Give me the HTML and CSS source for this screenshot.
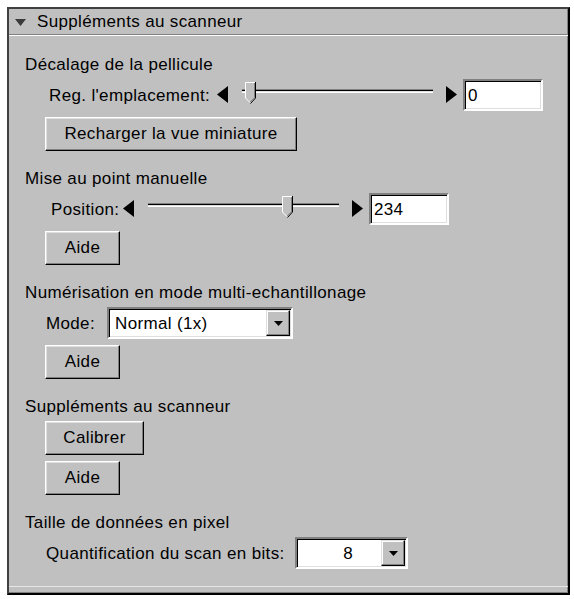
FILE: index.html
```html
<!DOCTYPE html>
<html lang="fr">
<head>
<meta charset="utf-8">
<title>Suppléments au scanneur</title>
<link rel="stylesheet" href="styles.css">
</head>
<body>
<div class="panel">
  <div class="header">
    <svg class="hdr-tri" width="11" height="7" viewBox="0 0 11 7"><polygon points="0,0 11,0 5.5,7" fill="#3a3a3a"/></svg>
    <span>Suppléments au scanneur</span>
  </div>
  <div class="content">
    <section class="group">
      <div class="glabel">Décalage de la pellicule</div>
      <div class="row">
        <span class="lbl lbl-reg">Reg. l'emplacement:</span>
        <svg class="arrow" width="11" height="17" viewBox="0 0 11 17"><polygon points="11,0 0,8.5 11,17" fill="#000"/></svg>
        <div class="track">
          <div class="channel"></div>
          <svg class="thumb" style="left:3px" width="11" height="22" viewBox="0 0 11 22"><polygon points="0,0 11,0 11,16 5.5,21.5 0,16" fill="#c0c0c0"/><polyline points="0.5,16 0.5,0.5 10,0.5" fill="none" stroke="#fff"/><polyline points="0.5,16 5,20.5" fill="none" stroke="#fff"/><polyline points="10.5,0 10.5,16 5.5,21.5" fill="none" stroke="#000"/><polyline points="9.5,1 9.5,15.7 5.2,20" fill="none" stroke="#808080"/></svg>
        </div>
        <svg class="arrow arrow-r" width="11" height="17" viewBox="0 0 11 17"><polygon points="0,0 11,8.5 0,17" fill="#000"/></svg>
        <div class="field">0</div>
      </div>
      <button class="btn btn-wide">Recharger la vue miniature</button>
    </section>

    <section class="group">
      <div class="glabel">Mise au point manuelle</div>
      <div class="row">
        <span class="lbl lbl-pos">Position:</span>
        <svg class="arrow" width="11" height="17" viewBox="0 0 11 17"><polygon points="11,0 0,8.5 11,17" fill="#000"/></svg>
        <div class="track">
          <div class="channel"></div>
          <svg class="thumb" style="left:134px" width="11" height="22" viewBox="0 0 11 22"><polygon points="0,0 11,0 11,16 5.5,21.5 0,16" fill="#c0c0c0"/><polyline points="0.5,16 0.5,0.5 10,0.5" fill="none" stroke="#fff"/><polyline points="0.5,16 5,20.5" fill="none" stroke="#fff"/><polyline points="10.5,0 10.5,16 5.5,21.5" fill="none" stroke="#000"/><polyline points="9.5,1 9.5,15.7 5.2,20" fill="none" stroke="#808080"/></svg>
        </div>
        <svg class="arrow arrow-r" width="11" height="17" viewBox="0 0 11 17"><polygon points="0,0 11,8.5 0,17" fill="#000"/></svg>
        <div class="field">234</div>
      </div>
      <button class="btn btn-aide">Aide</button>
    </section>

    <section class="group">
      <div class="glabel">Numérisation en mode multi-echantillonage</div>
      <div class="row">
        <span class="lbl lbl-mode">Mode:</span>
        <div class="select select-mode">
          <span class="val">Normal (1x)</span>
          <span class="dd"><svg width="9" height="5" viewBox="0 0 9 5"><polygon points="0,0 9,0 4.5,5" fill="#000"/></svg></span>
        </div>
      </div>
      <button class="btn btn-aide">Aide</button>
    </section>

    <section class="group">
      <div class="glabel">Suppléments au scanneur</div>
      <button class="btn btn-cal">Calibrer</button>
      <button class="btn btn-aide">Aide</button>
    </section>

    <section class="group">
      <div class="glabel">Taille de données en pixel</div>
      <div class="row">
        <span class="lbl lbl-quant">Quantification du scan en bits:</span>
        <div class="select select-bits">
          <span class="val val-num">8</span>
          <span class="dd"><svg width="9" height="5" viewBox="0 0 9 5"><polygon points="0,0 9,0 4.5,5" fill="#000"/></svg></span>
        </div>
      </div>
    </section>
  </div>
  <div class="foot"></div>
</div>
</body>
</html>
```

FILE: styles.css
```css
html, body {
  margin: 0;
  padding: 0;
  background: #ffffff;
}

body {
  font-family: "Liberation Sans", Arial, sans-serif;
  font-size: 17px;
  letter-spacing: 0.35px;
  color: #000;
}

.panel {
  margin: 7px 0 0 7px;
  width: 563px;
  height: 588px;
  box-sizing: border-box;
  background: #c0c0c0;
  border: 2px solid;
  border-color: #404040 #000 #000 #404040;
  box-shadow: inset -1px -1px #808080;
  display: flex;
  flex-direction: column;
}

.header {
  height: 25px;
  display: flex;
  align-items: center;
  border-bottom: 1px solid #808080;
  box-shadow: 0 1px #ffffff;
  padding-left: 6px;
}

.hdr-tri {
  margin-right: 11px;
  margin-top: 1px;
}

.content {
  flex: 1;
  padding: 18px 0 0 16px;
  display: flex;
  flex-direction: column;
  gap: 16px;
}

.group {
  display: flex;
  flex-direction: column;
  align-items: flex-start;
  gap: 6px;
}

.glabel {
  height: 22px;
  line-height: 24px;
  margin-bottom: -2px;
  white-space: nowrap;
}

.row {
  margin-left: 20px;
  height: 32px;
  display: flex;
  align-items: center;
}

.lbl {
  white-space: nowrap;
  display: block;
  padding-top: 2px;
}

.lbl-reg { margin-left: 4px; width: 168px; }
.lbl-pos { margin-left: 6px; width: 72px; }
.lbl-mode { margin-left: 1px; width: 61px; }
.lbl-quant { margin-left: 1px; width: 249px; }

.arrow {
  display: block;
  margin-top: -2px;
}

.track {
  position: relative;
  width: 191px;
  height: 32px;
  margin-left: 14px;
}

.channel {
  position: absolute;
  left: 0;
  right: 0;
  top: 10px;
  height: 4px;
  box-sizing: border-box;
  border-top: 1px solid #808080;
  border-bottom: 1px solid #ffffff;
  background: #000;
  box-shadow: inset 0 -1px #dfdfdf;
}

.thumb {
  position: absolute;
  top: 3px;
  display: block;
}

.arrow-r {
  margin-left: 13px;
}

.field {
  margin-left: 6px;
  width: 80px;
  height: 32px;
  box-sizing: border-box;
  background: #fff;
  border: 2px solid;
  border-color: #808080 #ffffff #ffffff #808080;
  box-shadow: inset 1px 1px #000, inset -1px -1px #dfdfdf;
  padding-left: 3px;
  line-height: 29px;
}

.btn {
  margin-left: 20px;
  height: 34px;
  box-sizing: border-box;
  padding: 0;
  font: inherit;
  letter-spacing: inherit;
  color: #000;
  background: #c0c0c0;
  border: 1px solid;
  border-color: #ffffff #000 #000 #ffffff;
  box-shadow: inset -1px -1px #808080, inset 1px 1px #dfdfdf;
  text-align: center;
}

.btn-wide { width: 252px; }
.btn-aide { width: 75px; }
.btn-cal { width: 99px; }

.select {
  height: 32px;
  box-sizing: border-box;
  background: #fff;
  border: 2px solid;
  border-color: #808080 #ffffff #ffffff #808080;
  box-shadow: inset 1px 1px #000, inset -1px -1px #dfdfdf;
  display: flex;
  align-items: stretch;
  padding: 1px 1px 1px 0;
}

.select-mode { width: 186px; }
.select-bits { width: 113px; }

.val {
  flex: 1;
  padding-left: 6px;
  line-height: 27px;
  white-space: nowrap;
}

.val-num {
  text-align: right;
  padding-right: 28px;
}

.dd {
  width: 24px;
  box-sizing: border-box;
  background: #c0c0c0;
  border: 1px solid;
  border-color: #dfdfdf #000 #000 #dfdfdf;
  box-shadow: inset -1px -1px #808080, inset 1px 1px #fff;
  display: flex;
  align-items: center;
  justify-content: center;
}

.dd svg {
  display: block;
}

.foot {
  height: 7px;
  border-top: 1px solid #e6e6e6;
  box-sizing: border-box;
}
```
